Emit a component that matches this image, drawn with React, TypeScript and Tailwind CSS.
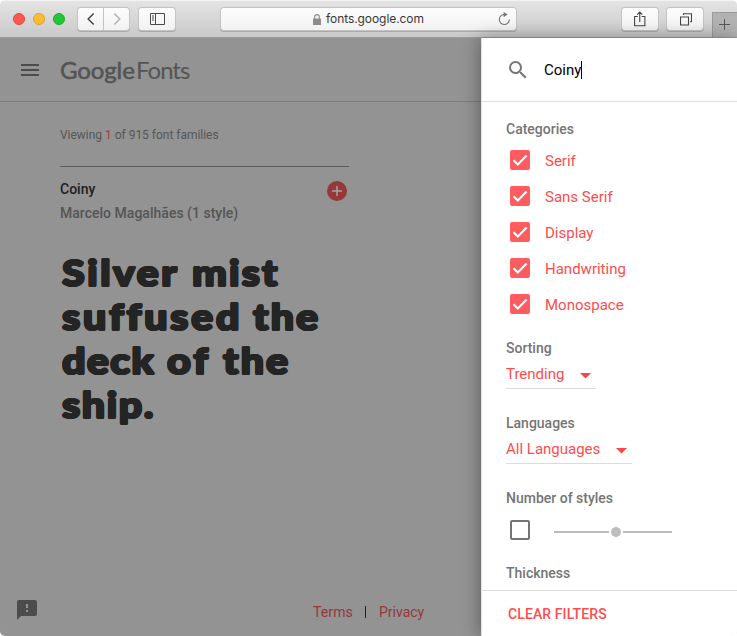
import React from "react";
import { MdSearch, MdFeedback, MdMenu } from "react-icons/md";

const categories = ["Serif", "Sans Serif", "Display", "Handwriting", "Monospace"];

function ToolButton({ className, children }: { className: string; children: React.ReactNode }) {
  return (
    <div
      className={
        "flex h-[22px] items-center justify-center bg-gradient-to-b from-[#fdfdfd] to-[#f2f2f2] shadow-[0_0_0_1px_#c4c4c4,0_1px_0_1px_#a9a9a9] " +
        className
      }
    >
      {children}
    </div>
  );
}

function Toolbar() {
  return (
    <div className="flex h-[38px] shrink-0 border-t border-b border-t-[#f3f3f3] border-b-[#9b9b9b] bg-gradient-to-b from-[#e4e4e4] to-[#c9c9c9]">
      <div className="mt-3 ml-[13px] flex gap-2">
        <div className="h-3 w-3 rounded-full border border-[#df4744] bg-[#fc5753]" />
        <div className="h-3 w-3 rounded-full border border-[#de9f34] bg-[#fdbc2e]" />
        <div className="h-3 w-3 rounded-full border border-[#1aab29] bg-[#24c638]" />
      </div>
      <ToolButton className="mt-[7px] ml-[13px] w-[25px] rounded-l-[3px]">
        <svg width="10" height="14" viewBox="0 0 10 14" fill="none" stroke="#444" strokeWidth="1.5">
          <path d="M7.7 1.5 2.2 7l5.5 5.5" />
        </svg>
      </ToolButton>
      <ToolButton className="mt-[7px] ml-px w-[25px] rounded-r-[3px]">
        <svg width="10" height="14" viewBox="0 0 10 14" fill="none" stroke="#b0b0b0" strokeWidth="1.4">
          <path d="M2.3 1.5 7.8 7l-5.5 5.5" />
        </svg>
      </ToolButton>
      <ToolButton className="mt-[7px] ml-[10px] w-9 rounded-[3px]">
        <svg width="15" height="12" viewBox="0 0 15 12" fill="none" stroke="#4a4a4a">
          <path d="M.5.5h14v11H.5zM5.5.5v11M2 3h2M2 5h2M2 7h2" />
        </svg>
      </ToolButton>
      <ToolButton className="mt-[7px] ml-[46px] w-[295px] rounded-[3px]">
        <svg className="ml-[92px]" width="8" height="11" viewBox="0 0 8 11">
          <path d="M0 4.5h8V11H0z" fill="#8c8c8c" />
          <path d="M1.7 5V2.9a2.3 2.3 0 0 1 4.6 0V5" fill="none" stroke="#8c8c8c" strokeWidth="1.1" />
        </svg>
        <span className="ml-[5px] w-[100px] font-['Inter',sans-serif] text-[12px] leading-[24px] tracking-[-0.07px] text-[#383838]">
          fonts.google.com
        </span>
        <svg className="ml-auto mr-[5px]" width="14" height="14" viewBox="0 0 14 14">
          <path d="M8 2.6A5 5 0 1 0 12.3 7.5" fill="none" stroke="#747474" strokeWidth="1.1" />
          <path d="M6.6 0v5.2L10.6 2.6z" fill="#747474" />
        </svg>
      </ToolButton>
      <ToolButton className="mt-[7px] ml-[106px] w-9 rounded-[3px]">
        <svg width="12" height="16" viewBox="0 0 12 16" fill="none" stroke="#444" strokeWidth="1.1">
          <path d="M3.8 5.5H.6v9.2h10.3V5.5H7.7M5.75 11V1.2M3.2 3.7 5.75 1.1 8.3 3.7" />
        </svg>
      </ToolButton>
      <ToolButton className="mt-[7px] ml-[9px] w-9 rounded-[3px]">
        <svg className="ml-0.5" width="12" height="13" viewBox="0 0 12 13" fill="none" stroke="#444" strokeWidth="1.1">
          <path d="M.5 4h8v8h-8zM3.5 2V.7h8v8H10" />
        </svg>
      </ToolButton>
      <div className="mt-[11px] ml-auto flex h-[25px] w-[25px] items-center justify-center border-t border-l border-[#999] bg-[#b2b2b2]">
        <svg width="12" height="12" viewBox="0 0 12 12" stroke="#555">
          <path d="M5.5 0v11M0 5.5h11" />
        </svg>
      </div>
    </div>
  );
}

const specimenGlow =
  "[text-shadow:1px_0_#242424,-1px_0_#242424,0_1px_#242424,0_-1px_#242424,.7px_.7px_#242424,-.7px_.7px_#242424,.7px_-.7px_#242424,-.7px_-.7px_#242424]";

function Specimen() {
  return (
    <p
      className={
        "mt-[25px] w-[289px] pl-0.5 font-['Lato',sans-serif] text-[36px] leading-[44px] font-black whitespace-nowrap text-[#242424] [&_b]:origin-left [&_b]:scale-x-[1.15] [&_b]:font-black " +
        specimenGlow
      }
    >
      <span className="flex">
        <b className="w-[130px] tracking-[2px]">Silver </b>
        <b className="tracking-[1.7px]">mist</b>
      </span>
      <span className="flex">
        <b className="w-[191px] tracking-[2.25px] [font-variant-ligatures:none]">suffused </b>
        <b className="tracking-[1.7px]">the</b>
      </span>
      <span className="flex">
        <b className="w-[105px] tracking-[1px]">deck </b>
        <b className="w-[56px] tracking-[2.5px]">of </b>
        <b className="tracking-[1.7px]">the</b>
      </span>
      <span className="flex">
        <b className="tracking-[1.2px]">ship.</b>
      </span>
    </p>
  );
}

function Catalog() {
  return (
    <main className="flex w-[481px] shrink-0 flex-col bg-[#939393]">
      <header className="flex h-16 shrink-0 items-center border-b border-[#7c7c7c] pl-[18px]">
        <MdMenu className="h-6 w-6 text-[#4c4c4c]" />
        <div className="ml-[18px] flex font-['Lato',sans-serif] text-[24px] leading-8 text-[#545454]">
          <span className="w-[76px] tracking-[-0.1px] [-webkit-text-stroke:0.6px_#545454]">Google</span>
          <span className="tracking-[-1px]">Fonts</span>
        </div>
      </header>
      <section className="flex flex-col px-[60px]">
        <p className="mt-[23px] text-[12px] leading-5 tracking-[-0.02px] text-[#565656]">
          Viewing <span className="text-[#a5393b]">1</span> of 915 font families
        </p>
        <div className="mt-[21px] w-[289px] border-t border-[#5c5c5c]">
          <div className="flex justify-between pt-[10px]">
            <div className="text-[14px] leading-6 font-medium">
              <h2 className="text-[#202020]">Coiny</h2>
              <h3 className="tracking-[0.02px] text-[#555]">Marcelo Magalhães (1 style)</h3>
            </div>
            <div className="mt-1 mr-0.5 flex h-5 w-5 items-center justify-center rounded-full bg-[#963738]">
              <svg width="10" height="10" viewBox="0 0 10 10" stroke="#a5a5a5" strokeWidth="1.5">
                <path d="M5 0v10M0 5h10" />
              </svg>
            </div>
          </div>
        </div>
        <Specimen />
      </section>
      <footer className="mt-auto flex h-12 items-center pl-[15px] text-[14px] leading-6 text-[#963738]">
        <MdFeedback className="mt-[-4px] h-6 w-6 text-[#4c4c4c]" />
        <span className="ml-[274px] w-[52px] tracking-[0.1px]">Terms</span>
        <span className="mr-[13px] h-3 w-px bg-[#202020]" />
        <span>Privacy</span>
      </footer>
    </main>
  );
}

function Dropdown({ value, className }: { value: string; className: string }) {
  return (
    <div
      className={
        "flex h-[27px] items-center justify-between border-b border-[#dcdcdc] pr-[5px] text-[15px] leading-[26px] text-[#ff4c4c] " +
        className
      }
    >
      <span className="pb-0.5">{value}</span>
      <svg className="mt-0.5" width="11" height="6" viewBox="0 0 11 6" fill="#ff4444">
        <path d="M0 0h11L5.5 5.5z" />
      </svg>
    </div>
  );
}

function Heading({ children }: { children: React.ReactNode }) {
  return <h4 className="text-[14px] leading-5 font-medium text-[#757575]">{children}</h4>;
}

function FilterPanel() {
  return (
    <aside className="relative flex grow flex-col border-l border-[#e0e0e0] bg-white shadow-[-2px_0_16px_rgba(0,0,0,0.34)]">
      <div className="flex h-16 shrink-0 items-center border-b border-[#dcdcdc] pl-6">
        <MdSearch className="h-6 w-6 text-[#757575]" />
        <span className="ml-[14px] text-[15px] leading-6 text-black">Coiny</span>
        <span className="h-[18px] w-px bg-black" />
      </div>
      <div className="flex min-h-0 grow flex-col overflow-hidden pt-[17px] pl-6">
        <Heading>Categories</Heading>
        <ul className="mt-[11px] ml-1 flex flex-col gap-4">
          {categories.map((name) => (
            <li key={name} className="flex h-5 items-center">
              <span className="h-5 w-5 rounded-[2px] bg-[#ff5c5f]">
                <svg width="20" height="20" viewBox="0 0 20 20" fill="none" stroke="white" strokeWidth="2">
                  <path d="m3.5 10.2 4.3 4.3 8.8-9" />
                </svg>
              </span>
              <span className="mt-0.5 ml-[15px] text-[15px] leading-5 text-[#ff4c4c]">{name}</span>
            </li>
          ))}
        </ul>
        <div className="mt-6">
          <Heading>Sorting</Heading>
          <Dropdown value="Trending" className="mt-1 w-[90px]" />
        </div>
        <div className="mt-6">
          <Heading>Languages</Heading>
          <Dropdown value="All Languages" className="mt-1 w-[126px]" />
        </div>
        <div className="mt-6">
          <Heading>Number of styles</Heading>
          <div className="mt-3 ml-1 flex h-5 items-center">
            <span className="h-5 w-5 rounded-[2px] border-2 border-[#757575]" />
            <span className="mt-1 ml-6 flex items-center gap-0.5">
              <span className="h-0.5 w-[55px] bg-[#bdbdbd]" />
              <span className="h-[10px] w-[10px] rounded-full bg-[#bdbdbd]" />
              <span className="h-0.5 w-[49px] bg-[#bdbdbd]" />
            </span>
          </div>
        </div>
        <div className="mt-[23px]">
          <Heading>Thickness</Heading>
        </div>
      </div>
      <div className="flex h-[46px] shrink-0 items-center border-t border-[#dcdcdc] pl-[26px] text-[14px] leading-6 font-medium tracking-[0.1px] text-[#ff4c4c]">
        CLEAR FILTERS
      </div>
    </aside>
  );
}

export default function App() {
  return (
    <div className="h-[636px] w-[737px] bg-white font-['Roboto',sans-serif]">
      <div className="flex h-full w-full flex-col overflow-hidden rounded-[5px]">
        <Toolbar />
        <div className="flex min-h-0 grow">
          <Catalog />
          <FilterPanel />
        </div>
      </div>
    </div>
  );
}
